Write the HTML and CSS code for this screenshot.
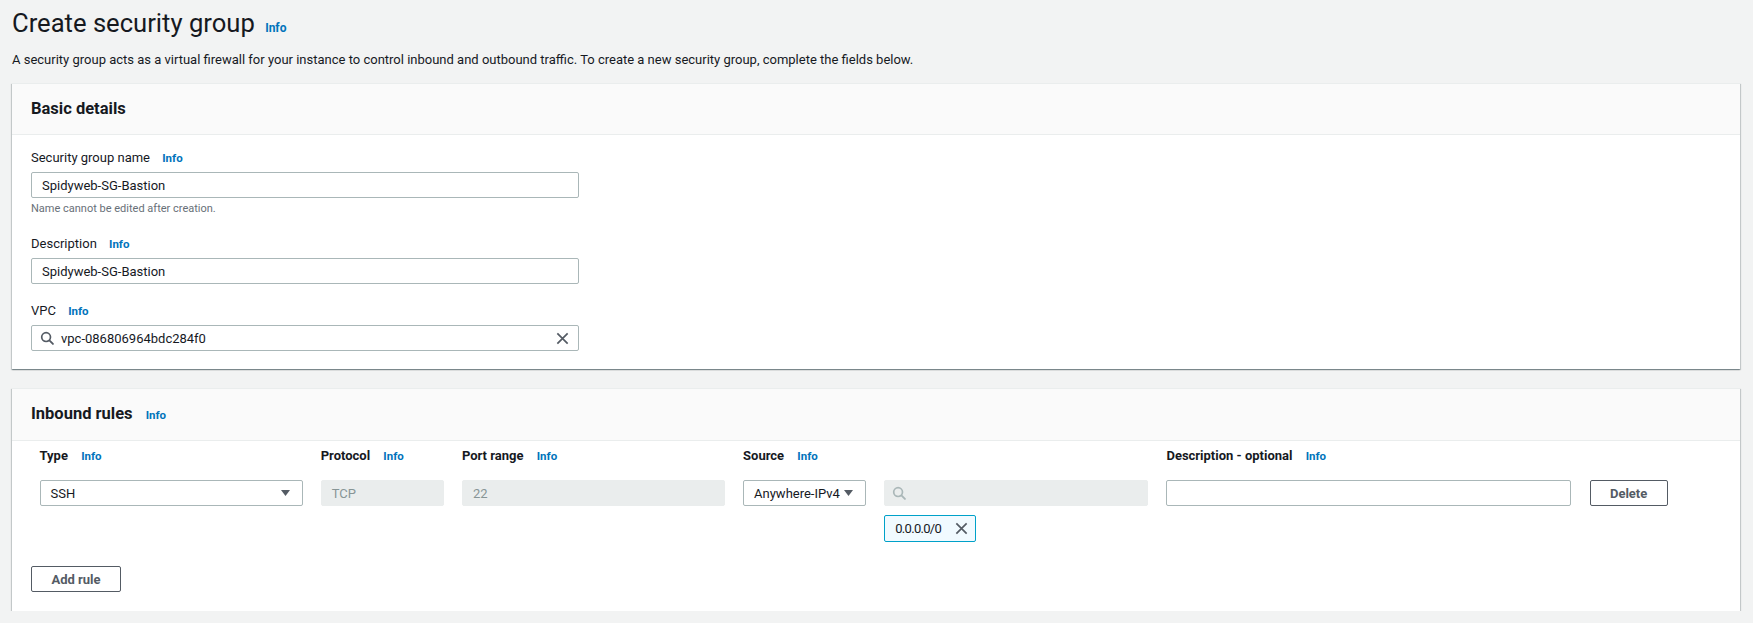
FILE: index.html
```html
<!DOCTYPE html>
<html lang="en">
<head>
<meta charset="utf-8">
<title>Create security group</title>
<link rel="stylesheet" href="styles.css">
</head>
<body>
<div class="page">
  <div class="page-header">
    <h1 class="title">Create security group <a class="info info-title" href="#">Info</a></h1>
    <p class="subtitle">A security group acts as a virtual firewall for your instance to control inbound and outbound traffic. To create a new security group, complete the fields below.</p>
  </div>

  <section class="card">
    <div class="card-header">
      <h2 class="card-title">Basic details</h2>
    </div>
    <div class="card-body">
      <div class="field">
        <div class="label">Security group name <a class="info" href="#">Info</a></div>
        <div class="input"><span class="value">Spidyweb-SG-Bastion</span></div>
        <div class="hint">Name cannot be edited after creation.</div>
      </div>
      <div class="field">
        <div class="label">Description <a class="info" href="#">Info</a></div>
        <div class="input"><span class="value">Spidyweb-SG-Bastion</span></div>
      </div>
      <div class="field">
        <div class="label">VPC <a class="info" href="#">Info</a></div>
        <div class="input input-search">
          <svg class="icon-search" viewBox="0 0 16 16" width="16" height="16"><circle cx="6.5" cy="6.5" r="4.7" fill="none" stroke="#545b64" stroke-width="1.8"/><line x1="10" y1="10" x2="13.8" y2="13.8" stroke="#545b64" stroke-width="2" stroke-linecap="round"/></svg>
          <span class="value">vpc-086806964bdc284f0</span>
          <svg class="icon-x" viewBox="0 0 16 16" width="16" height="16"><path d="M2.5 2.5 L13.5 13.5 M13.5 2.5 L2.5 13.5" stroke="#545b64" stroke-width="1.8" fill="none"/></svg>
        </div>
      </div>
    </div>
  </section>

  <section class="card">
    <div class="card-header">
      <h2 class="card-title">Inbound rules <a class="info" href="#">Info</a></h2>
    </div>
    <div class="card-body rules-body">
      <div class="rules-grid">
        <div class="col-label">Type <a class="info" href="#">Info</a></div>
        <div class="col-label">Protocol <a class="info" href="#">Info</a></div>
        <div class="col-label">Port range <a class="info" href="#">Info</a></div>
        <div class="col-label">Source <a class="info" href="#">Info</a></div>
        <div class="col-label"></div>
        <div class="col-label">Description - optional <a class="info" href="#">Info</a></div>
        <div class="col-label"></div>

        <div class="input select cell"><span class="value">SSH</span><svg class="caret" viewBox="0 0 9 6" width="9" height="6"><polygon points="0,0 9,0 4.5,6" fill="#545b64"/></svg></div>
        <div class="input disabled cell"><span class="value">TCP</span></div>
        <div class="input disabled cell"><span class="value">22</span></div>
        <div class="input select cell"><span class="value">Anywhere-IPv4</span><svg class="caret" viewBox="0 0 9 6" width="9" height="6"><polygon points="0,0 9,0 4.5,6" fill="#545b64"/></svg></div>
        <div class="input disabled cell search-disabled">
          <svg class="icon-search" viewBox="0 0 16 16" width="16" height="16"><circle cx="6.5" cy="6.5" r="4.7" fill="none" stroke="#aab7b8" stroke-width="1.8"/><line x1="10" y1="10" x2="13.8" y2="13.8" stroke="#aab7b8" stroke-width="2" stroke-linecap="round"/></svg>
        </div>
        <div class="input cell"></div>
        <div class="cell"><button class="btn btn-delete" type="button">Delete</button></div>

        <div class="token-cell">
          <span class="token"><span class="token-text">0.0.0.0/0</span><svg class="icon-x token-x" viewBox="0 0 16 16" width="16" height="16"><path d="M2.5 2.5 L13.5 13.5 M13.5 2.5 L2.5 13.5" stroke="#545b64" stroke-width="1.8" fill="none"/></svg></span>
        </div>
      </div>
      <button class="btn btn-add" type="button">Add rule</button>
    </div>
  </section>
</div>
</body>
</html>
```

FILE: styles.css
```css
* { box-sizing: border-box; }

html, body {
  margin: 0;
  padding: 0;
}

body {
  background: #f2f3f3;
  font-family: Roboto, "Liberation Sans", Arial, sans-serif;
  color: #16191f;
  font-size: 13px;
}

.page {
  padding: 0 13px 0 12px;
}

.page-header {
  padding-top: 5px;
}

.title {
  margin: 0;
  font-size: 25.6px;
  line-height: 36px;
  font-weight: 400;
  color: #16191f;
}

.info {
  color: #0073bb;
  font-weight: 700;
  font-size: 11.5px;
  text-decoration: none;
  margin-left: 9px;
  vertical-align: baseline;
}

.info-title {
  font-size: 12px;
  margin-left: 4px;
}

.subtitle {
  margin: 4px 0 0;
  font-size: 13px;
  line-height: 20px;
  color: #16191f;
}

.card {
  background: #fff;
  border-top: 1px solid #eaeded;
  box-shadow: 0 1px 1px 0 rgba(0, 28, 36, 0.3), 1px 1px 1px 0 rgba(0, 28, 36, 0.15), -1px 1px 1px 0 rgba(0, 28, 36, 0.15);
  margin-top: 13px;
}

.card + .card {
  margin-top: 19px;
}

.card-header {
  background: #fafafa;
  border-bottom: 1px solid #eaeded;
  padding: 13px 19px 13px;
}

.card-title {
  margin: 0;
  font-size: 16.5px;
  line-height: 24px;
  font-weight: 700;
}

.card-body {
  padding: 13px 19px 18px;
  display: flex;
  flex-direction: column;
  gap: 17px;
}

.field {
  display: flex;
  flex-direction: column;
  width: 548px;
}

.label {
  font-size: 13px;
  line-height: 20px;
  margin-bottom: 4px;
}

.input {
  height: 26px;
  border: 1px solid #aab7b8;
  border-radius: 2px;
  background: #fff;
  display: flex;
  align-items: center;
  padding: 0 10px;
  font-size: 13px;
  color: #16191f;
}

.hint {
  font-size: 11px;
  line-height: 16px;
  padding-top: 3px;
  color: #687078;
}

.input-search {
  padding: 0 8px 0 8px;
}

.input-search .value {
  flex: 1;
  margin-left: 6px;
}

.icon-search {
  width: 15px;
  height: 15px;
  flex: none;
}

.icon-x {
  width: 15px;
  height: 15px;
  flex: none;
}

/* Inbound rules */
.rules-body {
  padding-top: 5px;
  padding-bottom: 19px;
  gap: 24px;
}

.rules-grid {
  display: grid;
  grid-template-columns: 263px 123px 263px 123px 264px 405px 78px;
  column-gap: 18.2px;
  margin-left: 8.5px;
}

.col-label {
  font-size: 13px;
  line-height: 20px;
  font-weight: 700;
  margin-bottom: 14px;
}

.col-label .info {
  font-weight: 700;
  margin-left: 10px;
}

.select {
  justify-content: space-between;
  padding: 0 12px 0 10px;
}

.select .caret {
  flex: none;
}

.select .value {
  white-space: nowrap;
}

.disabled {
  background: #eaeded;
  border-color: #eaeded;
  color: #879596;
}

.search-disabled {
  padding-left: 7px;
}

.token-cell {
  grid-column: 5;
  margin-top: 9px;
}

.token {
  display: inline-flex;
  align-items: center;
  justify-content: space-between;
  width: 92px;
  height: 27px;
  padding: 0 6px 0 10px;
  background: #f1faff;
  border: 1px solid #00a1c9;
  border-radius: 2px;
  font-size: 13px;
  color: #16191f;
}

.token-text {
  letter-spacing: -0.7px;
}

.token-x {
  width: 15px;
  height: 15px;
}

.btn {
  font-family: Roboto, "Liberation Sans", Arial, sans-serif;
  font-size: 13px;
  font-weight: 700;
  color: #545b64;
  background: #fff;
  border: 1px solid #545b64;
  border-radius: 2px;
  height: 26px;
  padding: 0 19px;
  cursor: pointer;
}

.btn-delete {
  width: 78px;
  padding: 0;
}

.btn-add {
  align-self: flex-start;
  width: 90px;
  padding: 0;
}
```
